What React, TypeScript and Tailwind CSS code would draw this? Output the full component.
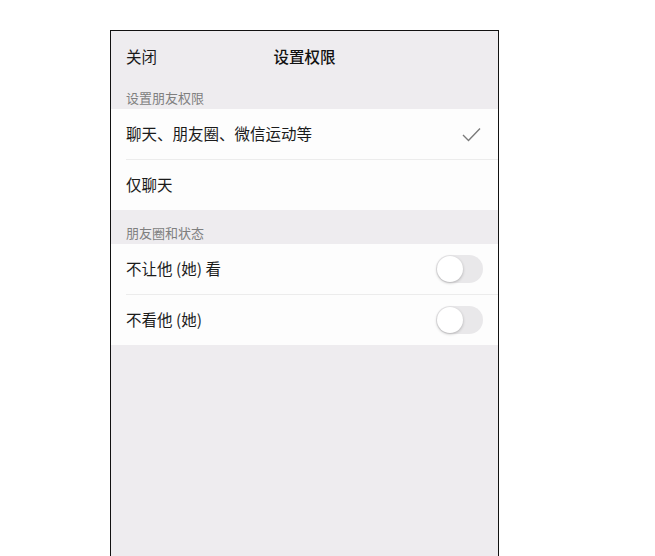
import { useState } from 'react'

const font = { fontFamily: '"Noto Sans CJK SC", "Noto Sans", sans-serif' }

function Toggle({ on, onChange }: { on: boolean; onChange: () => void }) {
  return (
    <button
      onClick={onChange}
      className={`relative w-[47px] h-[28px] rounded-full transition-colors ${
        on ? 'bg-[#4cd964]' : 'bg-[#e9e8ea]'
      }`}
    >
      <span
        className={`absolute top-[1px] w-[26px] h-[26px] rounded-full bg-white shadow-[0_1px_3px_rgba(0,0,0,0.25)] transition-all ${
          on ? 'left-[20px]' : 'left-[1px]'
        }`}
      />
    </button>
  )
}

function Check() {
  return (
    <svg width="19" height="15" viewBox="0 0 19 15" className="mr-[2px]">
      <path d="M1 8 L6.5 13.5 L18 1.5" fill="none" stroke="#7a7a7a" strokeWidth="1.4" />
    </svg>
  )
}

function Row({ label, children, divider }: { label: string; children?: React.ReactNode; divider?: boolean }) {
  return (
    <div className="pl-[15px] bg-[#fdfdfd]">
      <div
        className={`pr-[15px] flex items-center justify-between ${
          divider ? 'h-[51px] border-b border-[#ececec]' : 'h-[50px]'
        }`}
      >
        <span className="text-[15.5px] text-[#1b1b1b]">{label}</span>
        {children}
      </div>
    </div>
  )
}

function SectionLabel({ text, h }: { text: string; h: string }) {
  return (
    <div className={`${h} px-[15px] flex items-end pb-[2px] text-[13px] text-[#7f7f7f]`}>
      {text}
    </div>
  )
}

export default function App() {
  const [scope, setScope] = useState<'all' | 'chat'>('all')
  const [hideMine, setHideMine] = useState(false)
  const [hideTheirs, setHideTheirs] = useState(false)

  return (
    <div className="w-[655px] h-[556px] bg-white overflow-hidden" style={font}>
      <div className="ml-[110px] mt-[30px] w-[389px] h-[526px] border border-b-0 border-[#111] bg-[#eeecef]">
        {/* Nav bar */}
        <div className="h-[51px] px-[15px] relative flex items-center">
          <span className="text-[15.5px] text-[#1b1b1b]">关闭</span>
          <span className="absolute left-0 right-0 text-center text-[15.5px] font-medium text-[#111] pointer-events-none">
            设置权限
          </span>
        </div>

        <SectionLabel text="设置朋友权限" h="h-[27px]" />
        <div>
          <div onClick={() => setScope('all')}>
            <Row label="聊天、朋友圈、微信运动等" divider>
              {scope === 'all' && <Check />}
            </Row>
          </div>
          <div onClick={() => setScope('chat')}>
            <Row label="仅聊天">{scope === 'chat' && <Check />}</Row>
          </div>
        </div>

        <SectionLabel text="朋友圈和状态" h="h-[34px]" />
        <div>
          <Row label="不让他 (她) 看" divider>
            <Toggle on={hideMine} onChange={() => setHideMine(!hideMine)} />
          </Row>
          <Row label="不看他 (她)">
            <Toggle on={hideTheirs} onChange={() => setHideTheirs(!hideTheirs)} />
          </Row>
        </div>
      </div>
    </div>
  )
}
